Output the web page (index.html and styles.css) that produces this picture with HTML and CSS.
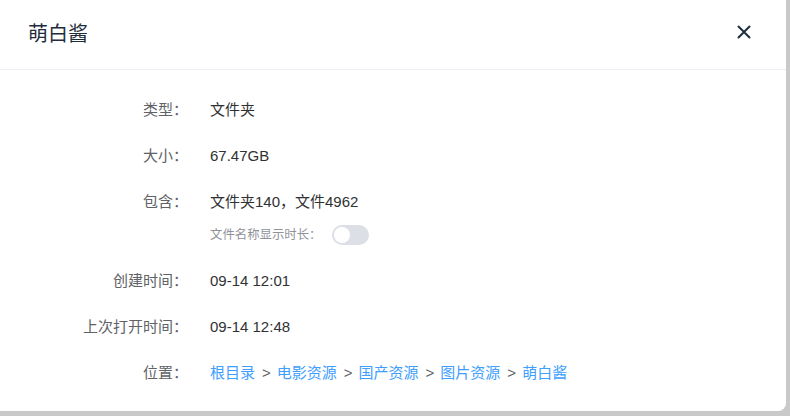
FILE: index.html
```html
<!DOCTYPE html>
<html lang="zh-CN">

<head>
  <meta charset="UTF-8" />
  <title>萌白酱</title>
  <link rel="stylesheet" href="styles.css">
</head>

<body>
  <div class="dialog">
    <div class="dialog-header">
      <span class="dialog-title">萌白酱</span>
      <button class="close-btn" aria-label="关闭">
        <svg width="14" height="14" viewBox="0 0 14 14">
          <path d="M1.5 1.5 L12.5 12.5 M12.5 1.5 L1.5 12.5" stroke="#1f2d3d" stroke-width="2" stroke-linecap="round" fill="none" />
        </svg>
      </button>
    </div>

    <div class="dialog-body">
      <div class="row">
        <div class="label">类型：</div>
        <div class="value">文件夹</div>
      </div>
      <div class="row">
        <div class="label">大小：</div>
        <div class="value">67.47GB</div>
      </div>
      <div class="row">
        <div class="label">包含：</div>
        <div class="value">
          <div>文件夹140，文件4962</div>
          <div class="sub">
            <span>文件名称显示时长：</span>
            <span class="switch"><span class="knob"></span></span>
          </div>
        </div>
      </div>
      <div class="row">
        <div class="label">创建时间：</div>
        <div class="value">09-14 12:01</div>
      </div>
      <div class="row">
        <div class="label">上次打开时间：</div>
        <div class="value">09-14 12:48</div>
      </div>
      <div class="row">
        <div class="label">位置：</div>
        <div class="value path"><a href="#">根目录</a><span class="sep">&gt;</span><a href="#">电影资源</a><span class="sep">&gt;</span><a href="#">国产资源</a><span class="sep">&gt;</span><a href="#">图片资源</a><span class="sep">&gt;</span><a href="#">萌白酱</a></div>
      </div>
    </div>
  </div>
</body>

</html>
```

FILE: styles.css
```css
* {
  box-sizing: border-box;
}

body {
  margin: 0;
  background: #c9c9c9;
  font-family: "Liberation Sans", "Noto Sans CJK SC", sans-serif;
  width: 790px;
  height: 416px;
  overflow: hidden;
}

.dialog {
  width: 786px;
  height: 411px;
  background: #fff;
  border-radius: 0 0 8px 0;
}

.dialog-header {
  height: 70px;
  display: flex;
  align-items: center;
  justify-content: space-between;
  padding: 0 35px 5px 28px;
  border-bottom: 1px solid #ebeef5;
}

.dialog-title {
  font-size: 20px;
  color: #1f2d3d;
}

.close-btn {
  border: none;
  background: none;
  padding: 0;
  width: 14px;
  height: 14px;
  cursor: pointer;
  display: flex;
}

.dialog-body {
  padding-top: 30px;
  font-size: 15px;
}

.row {
  display: flex;
  line-height: 20px;
  margin-bottom: 26px;
}

.label {
  width: 188px;
  text-align: right;
  color: #606266;
  flex-shrink: 0;
}

.value {
  margin-left: 22px;
  color: #303133;
}

.sub {
  display: flex;
  align-items: center;
  margin-top: 13px;
  font-size: 12.4px;
  color: #909399;
}

.switch {
  position: relative;
  width: 37px;
  height: 20px;
  border-radius: 10px;
  background: #dcdfe6;
  margin-left: 10px;
}

.knob {
  position: absolute;
  top: 2px;
  left: 2px;
  width: 16px;
  height: 16px;
  border-radius: 50%;
  background: #fff;
}

.path a {
  color: #409eff;
  text-decoration: none;
}

.sep {
  color: #606266;
  margin: 0 6px 0 7px;
}
```
